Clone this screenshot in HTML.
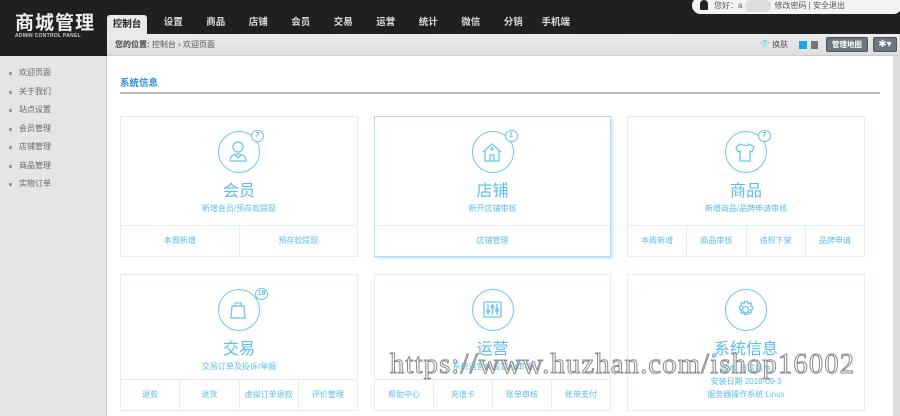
<!DOCTYPE html>
<html><head><meta charset="utf-8"><style>
*{margin:0;padding:0;box-sizing:border-box}
body{width:900px;height:416px;overflow:hidden;background:#fff;font-family:"Liberation Sans","Noto Sans CJK SC",sans-serif;position:relative}
.hd{position:absolute;left:0;top:0;width:900px;height:34px;background:repeating-linear-gradient(45deg,#1a1a1a 0 1px,#262626 1px 2px);}
.logo{position:absolute;left:15px;top:8px;color:#eee;font-size:19px;font-weight:bold;letter-spacing:1px}
.logo2{position:absolute;left:15px;top:33px;color:#ccc;font-size:5px;font-weight:bold;letter-spacing:.3px}
.lefttop{position:absolute;left:0;top:0;width:107px;height:56px;background:repeating-linear-gradient(45deg,#1a1a1a 0 1px,#262626 1px 2px)}
.nav{position:absolute;top:15px;left:107px;height:20px;display:flex;font-size:9.5px;font-weight:bold;color:#ddd}
.nav span{display:block;width:42.5px;text-align:center;line-height:16px}
.nav .on{background:#e9e9e9;color:#222;border-radius:3px 3px 0 0;height:20px;line-height:20px;width:40px;margin-right:5px}
.bc{position:absolute;left:107px;top:34px;width:793px;height:22px;background:linear-gradient(#ececec,#dedede);border-bottom:1px solid #ccc;font-size:8px;color:#555;line-height:22px;padding-left:8px}
.user{position:absolute;left:692px;top:-3px;width:210px;height:17px;background:#f3f3f3;border-radius:9px;font-size:8px;color:#555;line-height:17px;padding-left:22px}
.side{position:absolute;left:0;top:56px;width:107px;height:360px;background:#e5e5e5;border-right:1px solid #ccc}
.side div{font-size:8px;color:#666;height:18.5px;line-height:18.5px;padding-left:19px;position:relative}
.side div:before{content:"";position:absolute;left:9px;top:8px;width:3px;height:3px;background:#999}
.sys{position:absolute;left:120px;top:75px;font-size:9.5px;color:#2a8ccf;font-weight:bold}
.line{position:absolute;left:120px;top:92px;width:760px;height:2px;background:#bbb}
.scr{position:absolute;left:893px;top:56px;width:7px;height:360px;background:#ddd}
.card{position:absolute;border:1px solid #e0eef8;text-align:center;color:#5bbdea}
.card .c{position:absolute;left:50%;margin-left:-21px;top:14px;width:42px;height:42px;border:1.5px solid #6ec6ee;border-radius:50%}
.card .b{position:absolute;top:-2px;right:-5px;min-width:13px;height:12px;border:1.3px solid #6ec6ee;border-radius:7px;background:#fff;font-size:7px;line-height:10px;padding:0 1px;font-weight:bold}
.card .t{position:absolute;left:0;right:0;top:60px;font-size:16px}
.card .s{position:absolute;left:0;right:0;top:86px;font-size:8px}
.card .f{position:absolute;left:0;right:0;bottom:0;height:31px;border-top:1px solid #e0eef8;display:flex}
.card .f span{flex:1;font-size:8px;line-height:30px;border-left:1px solid #e0eef8}
.card .f span:first-child{border-left:0}
.wm{position:absolute;left:390px;top:349px;font-family:"Liberation Serif",serif;font-size:28.5px;color:rgba(255,255,255,.6);-webkit-text-stroke:1px #888;letter-spacing:1.2px;white-space:nowrap}
</style></head><body>
<div class="hd"></div><div class="lefttop"></div>
<div class="logo">商城管理</div><div class="logo2">ADMIN CONTROL PANEL</div>
<div class="nav"><span class="on">控制台</span><span>设置</span><span>商品</span><span>店铺</span><span>会员</span><span>交易</span><span>运营</span><span>统计</span><span>微信</span><span>分销</span><span>手机端</span></div>
<div class="user"><span style="position:absolute;left:8px;top:3px;width:8px;height:10px;background:#222;border-radius:4px 4px 1px 1px"></span>您好：a<span style="display:inline-block;width:26px;height:12px;background:#ddd;border-radius:6px;vertical-align:middle;margin:0 3px"></span>修改密码 | 安全退出</div>
<div class="bc"><b style="color:#444">您的位置:</b> 控制台 › 欢迎页面
<span style="position:absolute;left:653px;top:0">👕 换肤</span>
<span style="position:absolute;left:692px;top:7px;width:8px;height:8px;background:#19a5e8"></span>
<span style="position:absolute;left:704px;top:7px;width:7px;height:8px;background:#777"></span>
<span style="position:absolute;left:719px;top:3px;width:42px;height:15px;background:#6d7580;border:1px solid #555;border-radius:2px;color:#fff;font-size:7.5px;line-height:13px;text-align:center;font-weight:bold">管理地图</span>
<span style="position:absolute;left:766px;top:3px;width:24px;height:15px;background:#6d7580;border:1px solid #555;border-radius:2px;color:#fff;font-size:10px;line-height:13px;text-align:center">✱▾</span></div>
<div class="side" style="padding-top:8px"><div>欢迎页面</div><div>关于我们</div><div>站点设置</div><div>会员管理</div><div>店铺管理</div><div>商品管理</div><div>实物订单</div></div>
<div class="scr"></div>
<div class="sys">系统信息</div><div class="line"></div>

<div class="card" style="left:120px;top:116px;width:238px;height:141px"><div class="c"><span class="b">7</span><svg width="40" height="40" viewBox="0 0 40 40" fill="none" stroke="#6ec6ee" stroke-width="1.3"><circle cx="19" cy="15" r="5"/><path d="M11 29c0-5 4-7 8-7s8 2 8 7zM16 23l3 3 3-3"/></svg></div><div class="t">会员</div><div class="s">新增会员/预存款提现</div><div class="f"><span>本周新增</span><span>预存款提现</span></div></div>
<div class="card" style="left:374px;top:116px;width:237px;height:141px;border-color:#a8dcf5;box-shadow:2px 2px 2px #cfe9f7"><div class="c"><span class="b">1</span><svg width="40" height="40" viewBox="0 0 40 40" fill="none" stroke="#6ec6ee" stroke-width="1.3"><path d="M10 20l9-8 9 8M12 18v11h14V18M17 29v-6h4v6"/><circle cx="19" cy="17" r="1"/></svg></div><div class="t">店铺</div><div class="s">新开店铺审核</div><div class="f"><span>店铺管理</span></div></div>
<div class="card" style="left:627px;top:116px;width:238px;height:141px"><div class="c"><span class="b">7</span><svg width="40" height="40" viewBox="0 0 40 40" fill="none" stroke="#6ec6ee" stroke-width="1.3"><path d="M15 12l-5 3 2 5 2-1v10h10V19l2 1 2-5-5-3c-1 2-5 2-8 0z"/></svg></div><div class="t">商品</div><div class="s">新增商品/品牌申请审核</div><div class="f"><span>本周新增</span><span>商品审核</span><span>违规下架</span><span>品牌申请</span></div></div>

<div class="card" style="left:120px;top:274px;width:238px;height:137px"><div class="c"><span class="b" style="right:-9px">18</span><svg width="40" height="40" viewBox="0 0 40 40" fill="none" stroke="#6ec6ee" stroke-width="1.3"><path d="M13 16h12l1 12H12zM16 16v-3h6v3"/></svg></div><div class="t">交易</div><div class="s">交易订单及投诉/举报</div><div class="f"><span>退款</span><span>退货</span><span>虚拟订单退款</span><span>评价管理</span></div></div>
<div class="card" style="left:374px;top:274px;width:237px;height:137px"><div class="c"><svg width="40" height="40" viewBox="0 0 40 40" fill="none" stroke="#6ec6ee" stroke-width="1.3"><rect x="11" y="12" width="17" height="15" rx="1"/><path d="M15 14v11M19.5 14v11M24 14v11"/><circle cx="15" cy="21" r="1.3"/><circle cx="19.5" cy="17" r="1.3"/><circle cx="24" cy="20" r="1.3"/></svg></div><div class="t">运营</div><div class="s">系统运营类设置及审核</div><div class="f"><span>帮助中心</span><span>充值卡</span><span>账单审核</span><span>账单支付</span></div></div>
<div class="card" style="left:627px;top:274px;width:238px;height:137px"><div class="c"><svg width="40" height="40" viewBox="0 0 40 40" fill="none" stroke="#6ec6ee" stroke-width="1.3"><circle cx="19.5" cy="19.5" r="3"/><path d="M19.5 11.5l2 0 .6 2.3 2-1.2 1.4 1.4-1.2 2 2.3.6v2.8l-2.3.6 1.2 2-1.4 1.4-2-1.2-.6 2.3h-2.8l-.6-2.3-2 1.2-1.4-1.4 1.2-2-2.3-.6v-2.8l2.3-.6-1.2-2 1.4-1.4 2 1.2.6-2.3z"/></svg></div><div class="t">系统信息</div><div class="s" style="top:87px;line-height:13px">版本 当前版本<br>安装日期 2018-09-3<br>服务器操作系统 Linux</div></div>

<div class="wm">https://www.huzhan.com/ishop16002</div>
</body></html>
